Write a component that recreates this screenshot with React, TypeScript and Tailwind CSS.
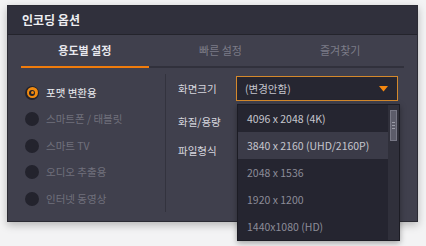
import React from 'react';

const font = { fontFamily: '"Noto Sans CJK KR", "Noto Sans", sans-serif' };

const purposes = [
  { label: '포맷 변환용', active: true },
  { label: '스마트폰 / 태블릿', active: false },
  { label: '스마트 TV', active: false },
  { label: '오디오 추출용', active: false },
  { label: '인터넷 동영상', active: false },
];

const sizes = [
  { label: '4096 x 2048 (4K)', bright: true, hover: false },
  { label: '3840 x 2160 (UHD/2160P)', bright: true, hover: true },
  { label: '2048 x 1536', bright: false, hover: false },
  { label: '1920 x 1200', bright: false, hover: false },
  { label: '1440x1080 (HD)', bright: false, hover: false },
];

function Radio({ on }: { on: boolean }) {
  if (on) {
    return (
      <div className="w-[14px] h-[14px] rounded-full bg-[#22222b] flex items-center justify-center">
        <div className="w-[11px] h-[11px] rounded-full bg-[#f08a10] flex items-center justify-center">
          <div className="w-[6px] h-[6px] rounded-full bg-[#22222b] flex items-center justify-center">
            <div className="w-[3px] h-[3px] rounded-full bg-[#f08a10]" />
          </div>
        </div>
      </div>
    );
  }
  return <div className="w-[14px] h-[14px] rounded-full bg-[#23232d]" />;
}

export default function App() {
  return (
    <div className="w-[426px] h-[246px] bg-[#f3f3f4] pl-[7px] pt-[5px] overflow-hidden" style={font}>
      <div className="relative w-[411px] h-[217px] bg-[#40404d] border border-[#2b2b34] shadow-[0_3px_8px_rgba(0,0,0,0.25)] flex flex-col">
        {/* title */}
        <div className="h-[31px] bg-[#30303c] border-b border-[#24242c] flex items-center pl-[14px] text-[12px] font-bold text-[#eeeef2]">
          인코딩 옵션
        </div>

        {/* tabs */}
        <div className="mx-[13px] h-[35px] flex border-b-2 border-[#31313c]">
          <div className="w-[128px] flex items-center justify-center text-[11px] font-bold text-[#e8e8ee] border-b-2 border-[#f07c0c] -mb-[2px]">
            용도별 설정
          </div>
          <div className="w-[128px] pl-[16px] flex items-center justify-center text-[11px] text-[#7c7c88]">빠른 설정</div>
          <div className="w-[128px] flex items-center justify-center text-[11px] text-[#7c7c88]">즐겨찾기</div>
        </div>

        {/* body */}
        <div className="flex pl-[17px] pt-[6px] pb-[9px] flex-1">
          <div className="w-[141px] flex flex-col pt-[6px] border-r border-[#33333e]">
            {purposes.map((p) => (
              <div key={p.label} className="h-[26.5px] flex items-center gap-[7px]">
                <Radio on={p.active} />
                <span className={`text-[10.5px] ${p.active ? 'text-[#ececf0]' : 'text-[#70707c]'}`}>{p.label}</span>
              </div>
            ))}
          </div>
          <div className="flex-1 flex flex-col pl-[12px] pt-[3px]">
            <div className="flex items-center h-[25px]">
              <span className="w-[58px] text-[10.5px] text-[#d6d6de]">화면크기</span>
              <div className="w-[162px] h-[25px] -mt-[1px] bg-[#262631] border border-[#d4892c] flex items-center justify-between pl-[8px] pr-[9px]">
                <span className="text-[10.5px] text-[#c4c4cc]">(변경안함)</span>
                <svg width="9" height="6" viewBox="0 0 9 6">
                  <path d="M0 0H9L4.5 5.5Z" fill="#f5870f" />
                </svg>
              </div>
            </div>
            <div className="h-[31px] flex items-center pt-[10px] text-[10.5px] text-[#d6d6de]">화질/용량</div>
            <div className="h-[26px] flex items-center pt-[10px] text-[10.5px] text-[#d6d6de]">파일형식</div>
          </div>
        </div>

        {/* open dropdown list */}
        <div className="absolute left-[229px] top-[98px] w-[163px] h-[137px] bg-[#252530] border border-[#1c1c24] shadow-[0_2px_6px_rgba(0,0,0,0.35)] flex">
          <div className="flex-1 flex flex-col">
            {sizes.map((s) => (
              <div
                key={s.label}
                className={`h-[27px] flex items-center pl-[9px] text-[10.5px] ${s.hover ? 'bg-[#3b3b48]' : ''} ${s.bright ? 'text-[#c6c6ce]' : 'text-[#8c8c98]'}`}
              >
                {s.label}
              </div>
            ))}
          </div>
          <div className="w-[11px] bg-[#30303b] flex justify-center pt-[5px]">
            <div className="w-[7px] h-[31px] bg-[#5c5c6a] border border-[#777785] flex flex-col items-center justify-center gap-[2px]">
              <div className="w-[3px] h-px bg-[#9a9aa6]" />
              <div className="w-[3px] h-px bg-[#9a9aa6]" />
              <div className="w-[3px] h-px bg-[#9a9aa6]" />
            </div>
          </div>
        </div>
      </div>
    </div>
  );
}
